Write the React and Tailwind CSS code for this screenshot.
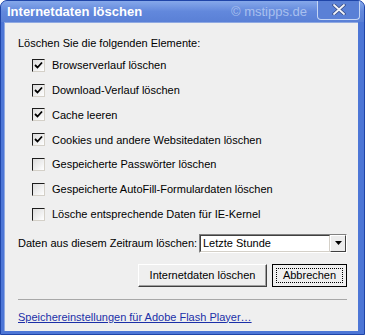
import { useState } from 'react';

const items = [
  { label: 'Browserverlauf löschen', checked: true },
  { label: 'Download-Verlauf löschen', checked: true },
  { label: 'Cache leeren', checked: true },
  { label: 'Cookies und andere Websitedaten löschen', checked: true },
  { label: 'Gespeicherte Passwörter löschen', checked: false },
  { label: 'Gespeicherte AutoFill-Formulardaten löschen', checked: false },
  { label: 'Lösche entsprechende Daten für IE-Kernel', checked: false },
];

function CheckBox({ checked }) {
  return (
    <span className="flex h-[13px] w-[13px] items-center justify-center border border-[#1c1c1c] border-r-[#d4d0c8] border-b-[#d4d0c8] bg-gradient-to-br from-[#dcdcdc] to-white">
      {checked && (
        <svg width="9" height="9" viewBox="0 0 9 9">
          <path d="M1 4 L3.5 6.5 L8 1.5" stroke="#000" strokeWidth="1.8" fill="none" />
        </svg>
      )}
    </span>
  );
}

export default function App() {
  const [checks, setChecks] = useState(items.map((i) => i.checked));

  return (
    <div
      className="flex h-[335px] w-[365px] flex-col overflow-hidden rounded-t-[7px] border border-[#1f45a8] bg-[#4d76d6] pb-[3px] pl-[3px] pr-[6px]"
      style={{ fontFamily: '"Liberation Sans", Arial, sans-serif' }}
    >
      {/* Titelleiste */}
      <div className="-mr-[6px] -ml-[3px] flex h-[21px] items-center bg-gradient-to-b from-[#86a8ea] via-[#6288dc] to-[#5a80d6] pl-[6px] pr-[4px]">
        <span className="text-[13px] font-bold text-white">Internetdaten löschen</span>
        <span className="ml-auto mr-[10px] text-[13px] text-[#a9c0ee]">© mstipps.de</span>
        <button className="-mt-[4px] flex h-[20px] w-[43px] items-center justify-center rounded-b-[4px] border border-[#c6d6f4] border-t-0 bg-[#5a80d6]">
          <svg width="14" height="11" viewBox="0 0 14 11">
            <path d="M2 1 L12 10 M12 1 L2 10" stroke="#3a4e86" strokeWidth="3.5" strokeLinecap="round" />
            <path d="M2 1 L12 10 M12 1 L2 10" stroke="#f2f4fa" strokeWidth="1.8" strokeLinecap="round" />
          </svg>
        </button>
      </div>

      {/* Inhalt */}
      <div className="flex flex-1 flex-col border-t border-l border-[#8fa9e2] bg-[#efefef] pl-[13px] pr-[5px] pt-[13px] text-[11px] text-black">
        <p className="h-[14px] leading-[14px]">Löschen Sie die folgenden Elemente:</p>
        <ul className="mt-[3px] flex flex-col pl-[14px]">
          {items.map((it, i) => (
            <li
              key={it.label}
              className="flex h-[24.8px] cursor-default items-center gap-[7px]"
              onClick={() => setChecks((c) => c.map((v, j) => (j === i ? !v : v)))}
            >
              <CheckBox checked={checks[i]} />
              <span>{it.label}</span>
            </li>
          ))}
        </ul>

        <div className="mt-[7px] flex h-[19px] items-center">
          <span>Daten aus diesem Zeitraum löschen:</span>
          <div className="ml-auto mr-[6px] flex h-[19px] w-[148px] items-center border border-[#808080] border-r-white border-b-white bg-white">
            <span className="flex-1 self-stretch border border-[#404040] border-r-[#d4d0c8] border-b-[#d4d0c8] pl-[2px] leading-[15px]">Letzte Stunde</span>
            <div className="flex h-full w-[16px] items-center justify-center border border-white border-r-[#404040] border-b-[#404040] bg-[#ececec]">
              <svg width="7" height="4" viewBox="0 0 7 4">
                <path d="M0 0 H7 L3.5 4 Z" fill="#000" />
              </svg>
            </div>
          </div>
        </div>

        <div className="mt-[11px] flex justify-end gap-[5px] pr-[6px]">
          <button className="h-[23px] w-[129px] border border-white border-r-[#404040] border-b-[#404040] bg-[#efefef] shadow-[inset_-1px_-1px_0_#a0a0a0]">
            Internetdaten löschen
          </button>
          <button className="h-[23px] w-[75px] border border-black bg-[#efefef] p-[3px]">
            <span className="flex h-full w-full items-center justify-center border border-dotted border-black">Abbrechen</span>
          </button>
        </div>

        <div className="mt-[12px] mr-[6px] h-px bg-[#a8a8a8]" />

        <a href="#" className="mt-[9px] self-start text-[#1b2fa8] underline">
          Speichereinstellungen für Adobe Flash Player…
        </a>
      </div>
    </div>
  );
}
